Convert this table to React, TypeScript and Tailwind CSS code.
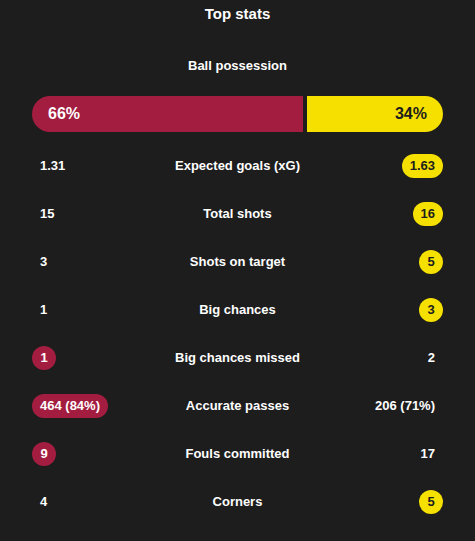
import React from "react";

type Side = "home" | "away" | null;

const rows: { label: string; home: string; away: string; win: Side }[] = [
  { label: "Expected goals (xG)", home: "1.31", away: "1.63", win: "away" },
  { label: "Total shots", home: "15", away: "16", win: "away" },
  { label: "Shots on target", home: "3", away: "5", win: "away" },
  { label: "Big chances", home: "1", away: "3", win: "away" },
  { label: "Big chances missed", home: "1", away: "2", win: "home" },
  { label: "Accurate passes", home: "464 (84%)", away: "206 (71%)", win: "home" },
  { label: "Fouls committed", home: "9", away: "17", win: "home" },
  { label: "Corners", home: "4", away: "5", win: "away" },
];

const Value = ({ text, hl, side }: { text: string; hl: boolean; side: "home" | "away" }) => {
  if (!hl) {
    return <span className="px-2 text-[13px] font-bold text-white">{text}</span>;
  }
  return (
    <span
      className={
        side === "home"
          ? "h-6 min-w-6 rounded-full bg-[#a31d40] px-2 text-center text-[13px] leading-6 font-bold text-white"
          : "h-6 min-w-6 rounded-full bg-[#f5e000] px-2 text-center text-[13px] leading-6 font-bold text-[#1d1d1d]"
      }
    >
      {text}
    </span>
  );
};

export default function App() {
  return (
    <div
      className="min-h-[541px] w-[475px] bg-[#1d1d1d] px-8 text-white"
      style={{ fontFamily: '"Liberation Sans", Arial, sans-serif' }}
    >
      <h2 className="h-7 text-center text-[15px] leading-7 font-bold">Top stats</h2>
      <p className="mt-[26px] text-center text-[13px] leading-6 font-bold">Ball possession</p>
      <div className="mt-[18px] flex h-9 gap-1">
        <div className="flex w-[66%] items-center rounded-l-full bg-[#a31d40] pl-4 text-[16px] font-bold text-white">
          66%
        </div>
        <div className="flex flex-1 items-center justify-end rounded-r-full bg-[#f5e000] pr-4 text-[16px] font-bold text-[#1d1d1d]">
          34%
        </div>
      </div>
      <div className="mt-[10px] flex flex-col">
        {rows.map((r) => (
          <div key={r.label} className="grid h-12 grid-cols-[1fr_auto_1fr] items-center">
            <div className="flex justify-start">
              <Value text={r.home} hl={r.win === "home"} side="home" />
            </div>
            <span className="text-center text-[13px] font-bold">{r.label}</span>
            <div className="flex justify-end">
              <Value text={r.away} hl={r.win === "away"} side="away" />
            </div>
          </div>
        ))}
      </div>
    </div>
  );
}
